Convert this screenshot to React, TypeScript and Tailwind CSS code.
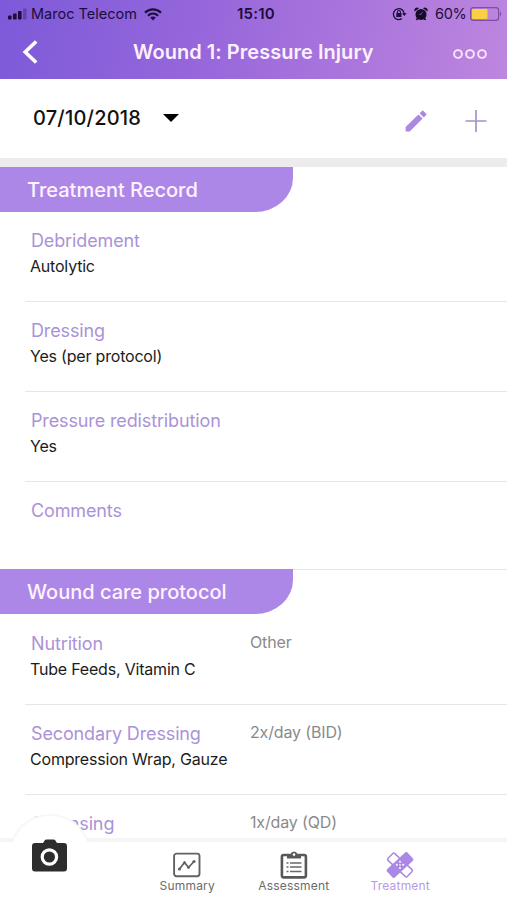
interface RecordItem {
  label: string;
  value?: string;
  frequency?: string;
  height?: string;
}

const treatmentRecord: RecordItem[] = [
  { label: "Debridement", value: "Autolytic" },
  { label: "Dressing", value: "Yes (per protocol)" },
  { label: "Pressure redistribution", value: "Yes" },
  { label: "Comments", height: "h-[88px]" },
];

const careProtocol: RecordItem[] = [
  { label: "Nutrition", value: "Tube Feeds, Vitamin C", frequency: "Other" },
  { label: "Secondary Dressing", value: "Compression Wrap, Gauze", frequency: "2x/day (BID)" },
  { label: "Cleansing", frequency: "1x/day (QD)" },
];

function StatusBar() {
  return (
    <div className="relative h-7 text-[#1d0d3d]">
      <div className="absolute left-2 top-[5px] flex items-center">
        <svg width="20" height="12" viewBox="0 0 20 12" fill="currentColor">
          <rect x="0" y="7.5" width="3.6" height="4" rx="1" />
          <rect x="5" y="5.5" width="3.6" height="6" rx="1" />
          <rect x="10" y="3" width="3.6" height="8.5" rx="1" />
          <rect x="15" y="0.5" width="3.6" height="11" rx="1" opacity="0.3" />
        </svg>
        <span className="ml-[3px] text-[14.5px] leading-[18px]">Maroc Telecom</span>
        <svg className="ml-[7px]" width="18" height="13" viewBox="0 0 18 13" fill="none" stroke="currentColor" strokeWidth="2.2">
          <path d="M1 4.6C5.6 0.3 12.4 0.3 17 4.6" />
          <path d="M3.9 7.7C6.9 5 11.1 5 14.1 7.7" />
          <path d="M6.2 9.6C7.8 8.2 10.2 8.2 11.8 9.6L9 12.6Z" fill="currentColor" stroke="none" />
        </svg>
      </div>
      <span className="absolute left-[237px] top-[5px] text-[15px] font-semibold leading-[18px] tracking-[0.2px]">15:10</span>
      <div className="absolute right-[5px] top-[5px] flex items-center">
        <svg width="15" height="14" viewBox="0 0 15 14" fill="none" stroke="currentColor">
          <path d="M12.2 7A5.4 5.4 0 1 0 9.8 11.6" strokeWidth="1.3" />
          <path d="M10 6.2H14.6L12.3 9Z" fill="currentColor" stroke="none" />
          <rect x="4.3" y="6.1" width="5.2" height="4" rx="0.5" fill="currentColor" stroke="none" />
          <path d="M5.4 6.2V5A1.5 1.5 0 0 1 8.4 5V6.2" strokeWidth="1.1" />
        </svg>
        <svg className="ml-[7px]" width="14" height="14" viewBox="0 0 14 14">
          <g fill="#150a28">
            <circle cx="7" cy="7.4" r="5.5" />
            <path d="M0.6 4.4A2.8 2.8 0 0 1 5 1.2Z" />
            <path d="M13.4 4.4A2.8 2.8 0 0 0 9 1.2Z" />
            <path d="M3.2 10.4L1.8 12.4L2.8 13.2L5 12Z" />
            <path d="M10.8 10.4L12.2 12.4L11.2 13.2L9 12Z" />
          </g>
          <path d="M8.6 4.8L7 7.4H5" fill="none" stroke="#8a5cc0" strokeWidth="0.8" />
        </svg>
        <span className="ml-[7px] w-[32px] text-[14.5px] leading-[18px] tracking-[-0.3px]">60%</span>
        <svg className="ml-[3px]" width="32" height="14" viewBox="0 0 32 14">
          <rect x="0.6" y="0.6" width="28" height="12.8" rx="2.6" fill="none" stroke="#7c4ea6" strokeWidth="1.2" />
          <rect x="2" y="2" width="15.5" height="10" rx="1" fill="#f9d040" />
          <path d="M30 4.8C31.5 5.2 31.5 8.8 30 9.2Z" fill="#7c4ea6" />
        </svg>
      </div>
    </div>
  );
}

function SectionTitle({ title }: { title: string }) {
  return (
    <h2 className="relative h-[45px] w-[293px] rounded-br-[38px_34px] bg-[#ad87e8] pl-[27px] text-[20px] font-medium leading-[46px] text-[#fdf3ff]">
      {title}
    </h2>
  );
}

function RecordRow({ item }: { item: RecordItem }) {
  return (
    <div className={`ml-[25px] flex border-b border-[#e6e6e8] pt-[15px] ${item.height ?? "h-[90px]"}`}>
      <div className="w-[225px] whitespace-nowrap">
        <p className="pl-[6px] pt-[2px] text-[18px] leading-6 tracking-[-0.13px] text-[#ab92d8]">{item.label}</p>
        {item.value && <p className="mt-px pl-[5px] text-[16px] leading-6 tracking-[-0.2px] text-[#1c1c1c]">{item.value}</p>}
      </div>
      {item.frequency && <p className="text-[16px] leading-6 tracking-[-0.15px] text-[#8a8a8a]">{item.frequency}</p>}
    </div>
  );
}

function SummaryIcon() {
  return (
    <svg width="28" height="26" viewBox="0 0 28 26" fill="none" stroke="#626262">
      <rect x="1.1" y="1.6" width="25.4" height="22.6" rx="2.4" strokeWidth="1.9" />
      <path d="M6.5 17L11.5 10.5L15.5 15.5L21 9.5" strokeWidth="1.7" />
      <g fill="#626262" stroke="none">
        <circle cx="6.5" cy="17" r="1.6" />
        <circle cx="11.5" cy="10.7" r="1.5" />
        <circle cx="15.5" cy="15.3" r="1.5" />
        <circle cx="21" cy="9.5" r="1.6" />
      </g>
    </svg>
  );
}

function AssessmentIcon() {
  return (
    <svg width="28" height="28" viewBox="0 0 28 28" fill="none">
      <rect x="1.9" y="4" width="24" height="22.4" rx="1.8" stroke="#585858" strokeWidth="2.6" />
      <path d="M7 3.2H10.6A3.5 3.5 0 0 1 17.4 3.2H21V7.6H7Z" fill="#585858" />
      <circle cx="14" cy="3.6" r="1.3" fill="#fff" />
      <g stroke="#686868" strokeWidth="1.5">
        <path d="M6.5 12H8.5M6.5 16H8.5M6.5 20.5H8.5" />
        <path d="M10 12H21.5M10 16H21.5M10 20.5H21.5" />
      </g>
    </svg>
  );
}

function TreatmentIcon() {
  return (
    <svg width="28" height="26" viewBox="0 0 28 26" fill="none">
      <g transform="rotate(43 14 13)">
        <rect x="0.8" y="8.2" width="26.4" height="9.6" rx="1.6" fill="#fff" stroke="#ab88e6" strokeWidth="1.5" />
      </g>
      <g transform="rotate(-43 14 13)">
        <rect x="0" y="7.3" width="28" height="11.4" rx="2" fill="#ab88e6" />
      </g>
      <g fill="#fff">
        <circle cx="14" cy="9.8" r="1" />
        <circle cx="10.8" cy="12.8" r="1" />
        <circle cx="17.2" cy="12.8" r="1" />
        <circle cx="14" cy="16" r="1" />
        <circle cx="14" cy="12.9" r="0.8" />
      </g>
    </svg>
  );
}

const tabs = [
  { label: "Summary", icon: SummaryIcon, color: "text-[#6b6b6b]" },
  { label: "Assessment", icon: AssessmentIcon, color: "text-[#6b6b6b]" },
  { label: "Treatment", icon: TreatmentIcon, color: "text-[#b79ae6]" },
];

export default function App() {
  return (
    <div className="relative h-[900px] w-[507px] overflow-hidden bg-white font-['Inter',sans-serif]">
      {/* Header */}
      <header className="h-[79px] bg-[linear-gradient(100deg,#7d5ad9_0%,#9566db_38%,#a873dc_65%,#bd86df_100%)]">
        <StatusBar />
        <div className="flex h-[48px] items-center pl-[22px] pr-5">
          <svg width="16" height="24" viewBox="0 0 16 24" fill="none" stroke="#fff" strokeWidth="3.6">
            <path d="M14.2 1.5L3.2 12L14.2 22.5" />
          </svg>
          <h1 className="ml-[95px] whitespace-nowrap text-[20px] font-semibold tracking-[0.04px] text-[#fcf0ff]">Wound 1: Pressure Injury</h1>
          <svg className="ml-auto mt-[3px]" width="34" height="12" viewBox="0 0 34 12" fill="none" stroke="#fbe6ff" strokeWidth="1.9">
            <circle cx="5" cy="6" r="3.9" />
            <circle cx="17" cy="6" r="3.9" />
            <circle cx="29" cy="6" r="3.9" />
          </svg>
        </div>
      </header>

      {/* Date picker and actions */}
      <div className="flex h-[88px] items-center border-b-[9px] border-[#edebed] pl-[33px] pr-5">
        <span className="-mt-px text-[20px] font-medium leading-6 tracking-[0.2px] text-[#111]">07/10/2018</span>
        <svg className="-mt-px ml-[22px]" width="16" height="8" viewBox="0 0 16 8">
          <path d="M0 0H16L8 8Z" fill="#000" />
        </svg>
        <svg className="ml-auto mt-[5px]" width="22" height="22" viewBox="0 0 22 22" fill="#a98ae0">
          <path d="M0.6 17L13.4 4.4L17.6 8.6L4.8 21.4H0.6Z" />
          <path d="M14.6 3.2L17.2 0.8Q17.8 0.4 18.4 0.9L21.2 3.7Q21.7 4.4 21.2 5L18.8 7.4Z" />
        </svg>
        <svg className="ml-[38px] mt-1" width="22" height="22" viewBox="0 0 22 22" stroke="#a493c8" strokeWidth="1.7">
          <path d="M11 0V22M0.5 11H21.5" />
        </svg>
      </div>

      {/* Records */}
      <main>
        <SectionTitle title="Treatment Record" />
        {treatmentRecord.map((item) => (
          <RecordRow key={item.label} item={item} />
        ))}
        <div className="-mt-px pb-px">
          <SectionTitle title="Wound care protocol" />
        </div>
        {careProtocol.map((item) => (
          <RecordRow key={item.label} item={item} />
        ))}
      </main>

      {/* Tab bar */}
      <nav className="absolute inset-x-0 bottom-0 h-[62px] border-t-4 border-[#f5f5f5] bg-white">
        <div className="absolute -top-[28px] left-[9px] size-[82px] rounded-full border-2 border-[#f7f7f7] bg-white [clip-path:inset(0_0_54px_0)]" />
        <div className="absolute -top-[26px] left-[11px] size-[78px] rounded-full bg-white" />
        <svg className="absolute left-[32px] top-[-3px]" width="36" height="33" viewBox="0 0 36 33">
          <path d="M11 4L13 1Q13.5 0.5 14.3 0.5H21.7Q22.5 0.5 23 1L25 4H32Q35 4 35 7V29.5Q35 32.5 32 32.5H3Q0 32.5 0 29.5V7Q0 4 3 4Z" fill="#2d2d2d" />
          <circle cx="17.4" cy="18" r="7.2" fill="#2d2d2d" stroke="#fff" strokeWidth="3.2" />
        </svg>
        <div className="ml-[134px] flex pt-[9px]">
          {tabs.map(({ label, icon: Icon, color }) => (
            <div key={label} className="flex w-[106.5px] flex-col items-center">
              <div className="flex h-7 items-center">
                <Icon />
              </div>
              <span className={`-mt-px text-[12px] leading-[15px] tracking-[0.2px] ${color}`}>{label}</span>
            </div>
          ))}
        </div>
      </nav>
    </div>
  );
}
